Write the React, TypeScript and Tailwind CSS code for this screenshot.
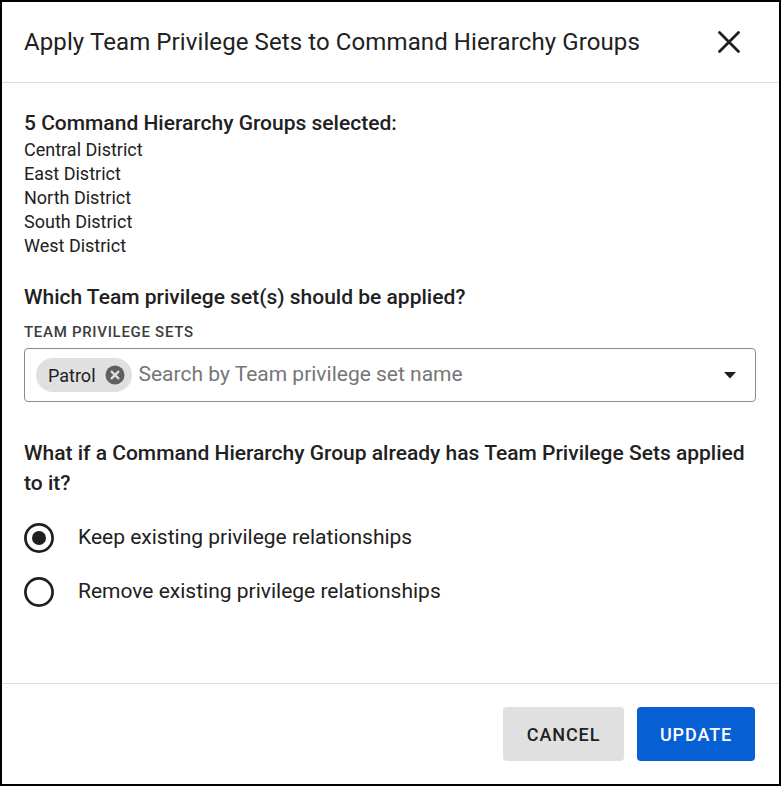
import React, { useState } from 'react';

const groups = ['Central District', 'East District', 'North District', 'South District', 'West District'];

const options = [
  { id: 'keep', label: 'Keep existing privilege relationships' },
  { id: 'remove', label: 'Remove existing privilege relationships' },
];

function RadioIcon({ checked }: { checked: boolean }) {
  return (
    <svg width="30" height="30" viewBox="0 0 30 30" className="shrink-0">
      <circle cx="15" cy="15" r="13.6" fill="none" stroke="#1f1f1f" strokeWidth="2.7" />
      {checked && <circle cx="15" cy="15" r="7" fill="#1f1f1f" />}
    </svg>
  );
}

export default function App() {
  const [mode, setMode] = useState('keep');

  return (
    <div className="w-[781px] h-[786px] border-2 border-black bg-white flex flex-col font-['Roboto',sans-serif] text-[#212121]">
      <div className="h-[81px] shrink-0 flex items-center justify-between pl-[22px] pr-[39px] border-b border-[#dedede]">
        <h1 className="text-[24px] leading-[30px] font-normal tracking-[0.1px]">Apply Team Privilege Sets to Command Hierarchy Groups</h1>
        <button className="w-[22px] h-[22px]">
          <svg width="22" height="22" viewBox="0 0 22 22">
            <path d="M1.5 1.5 L20.5 20.5 M20.5 1.5 L1.5 20.5" stroke="#1f1f1f" strokeWidth="2.8" strokeLinecap="round" />
          </svg>
        </button>
      </div>

      <div className="flex-1 pl-[22px] pr-[23px] pt-[28px]">
        <h2 className="text-[21px] leading-[24px] font-medium mb-[3px]">5 Command Hierarchy Groups selected:</h2>
        <ul>
          {groups.map((g) => (
            <li key={g} className="text-[18px] leading-[24px]">{g}</li>
          ))}
        </ul>

        <h2 className="mt-[27px] text-[21px] leading-[24px] font-medium">Which Team privilege set(s) should be applied?</h2>
        <div className="mt-[15px] text-[15px] leading-[16px] font-medium tracking-[0.7px] text-[#3d3d3d]">TEAM PRIVILEGE SETS</div>
        <div className="mt-[8px] h-[54px] border border-[#8c8c8c] rounded-[4px] flex items-center pl-[11px] pr-[19px]">
          <span className="h-[34px] rounded-full bg-[#e0e0e0] flex items-center pl-[12px] pr-[7px] gap-[9px]">
            <span className="text-[18px]">Patrol</span>
            <svg width="20" height="20" viewBox="0 0 20 20">
              <circle cx="10" cy="10" r="9.5" fill="#5f5f5f" />
              <path d="M6.6 6.6 L13.4 13.4 M13.4 6.6 L6.6 13.4" stroke="#e0e0e0" strokeWidth="2.2" strokeLinecap="round" />
            </svg>
          </span>
          <input
            className="flex-1 ml-[7px] text-[21px] outline-none placeholder:text-[#767676] bg-transparent"
            placeholder="Search by Team privilege set name"
          />
          <svg width="12" height="7" viewBox="0 0 12 7">
            <path d="M0 0 L12 0 L6 6.5 Z" fill="#1f1f1f" />
          </svg>
        </div>

        <h2 className="mt-[36px] text-[21px] leading-[30px] font-medium pr-[9px]">
          What if a Command Hierarchy Group already has Team Privilege Sets applied to it?
        </h2>
        <div className="mt-[13px]">
          {options.map((o) => (
            <label key={o.id} className="h-[54px] flex items-center gap-[24px] cursor-pointer" onClick={() => setMode(o.id)}>
              <RadioIcon checked={mode === o.id} />
              <span className="text-[21px]">{o.label}</span>
            </label>
          ))}
        </div>
      </div>

      <div className="h-[101px] shrink-0 border-t border-[#dedede] flex items-center justify-end gap-[13px] pr-[24px]">
        <button className="w-[121px] h-[54px] rounded-[4px] bg-[#e0e0e0] text-[18px] font-medium tracking-[0.9px] text-[#212121]">CANCEL</button>
        <button className="w-[118px] h-[54px] rounded-[4px] bg-[#0660d4] text-[18px] font-medium tracking-[0.9px] text-white">UPDATE</button>
      </div>
    </div>
  );
}
